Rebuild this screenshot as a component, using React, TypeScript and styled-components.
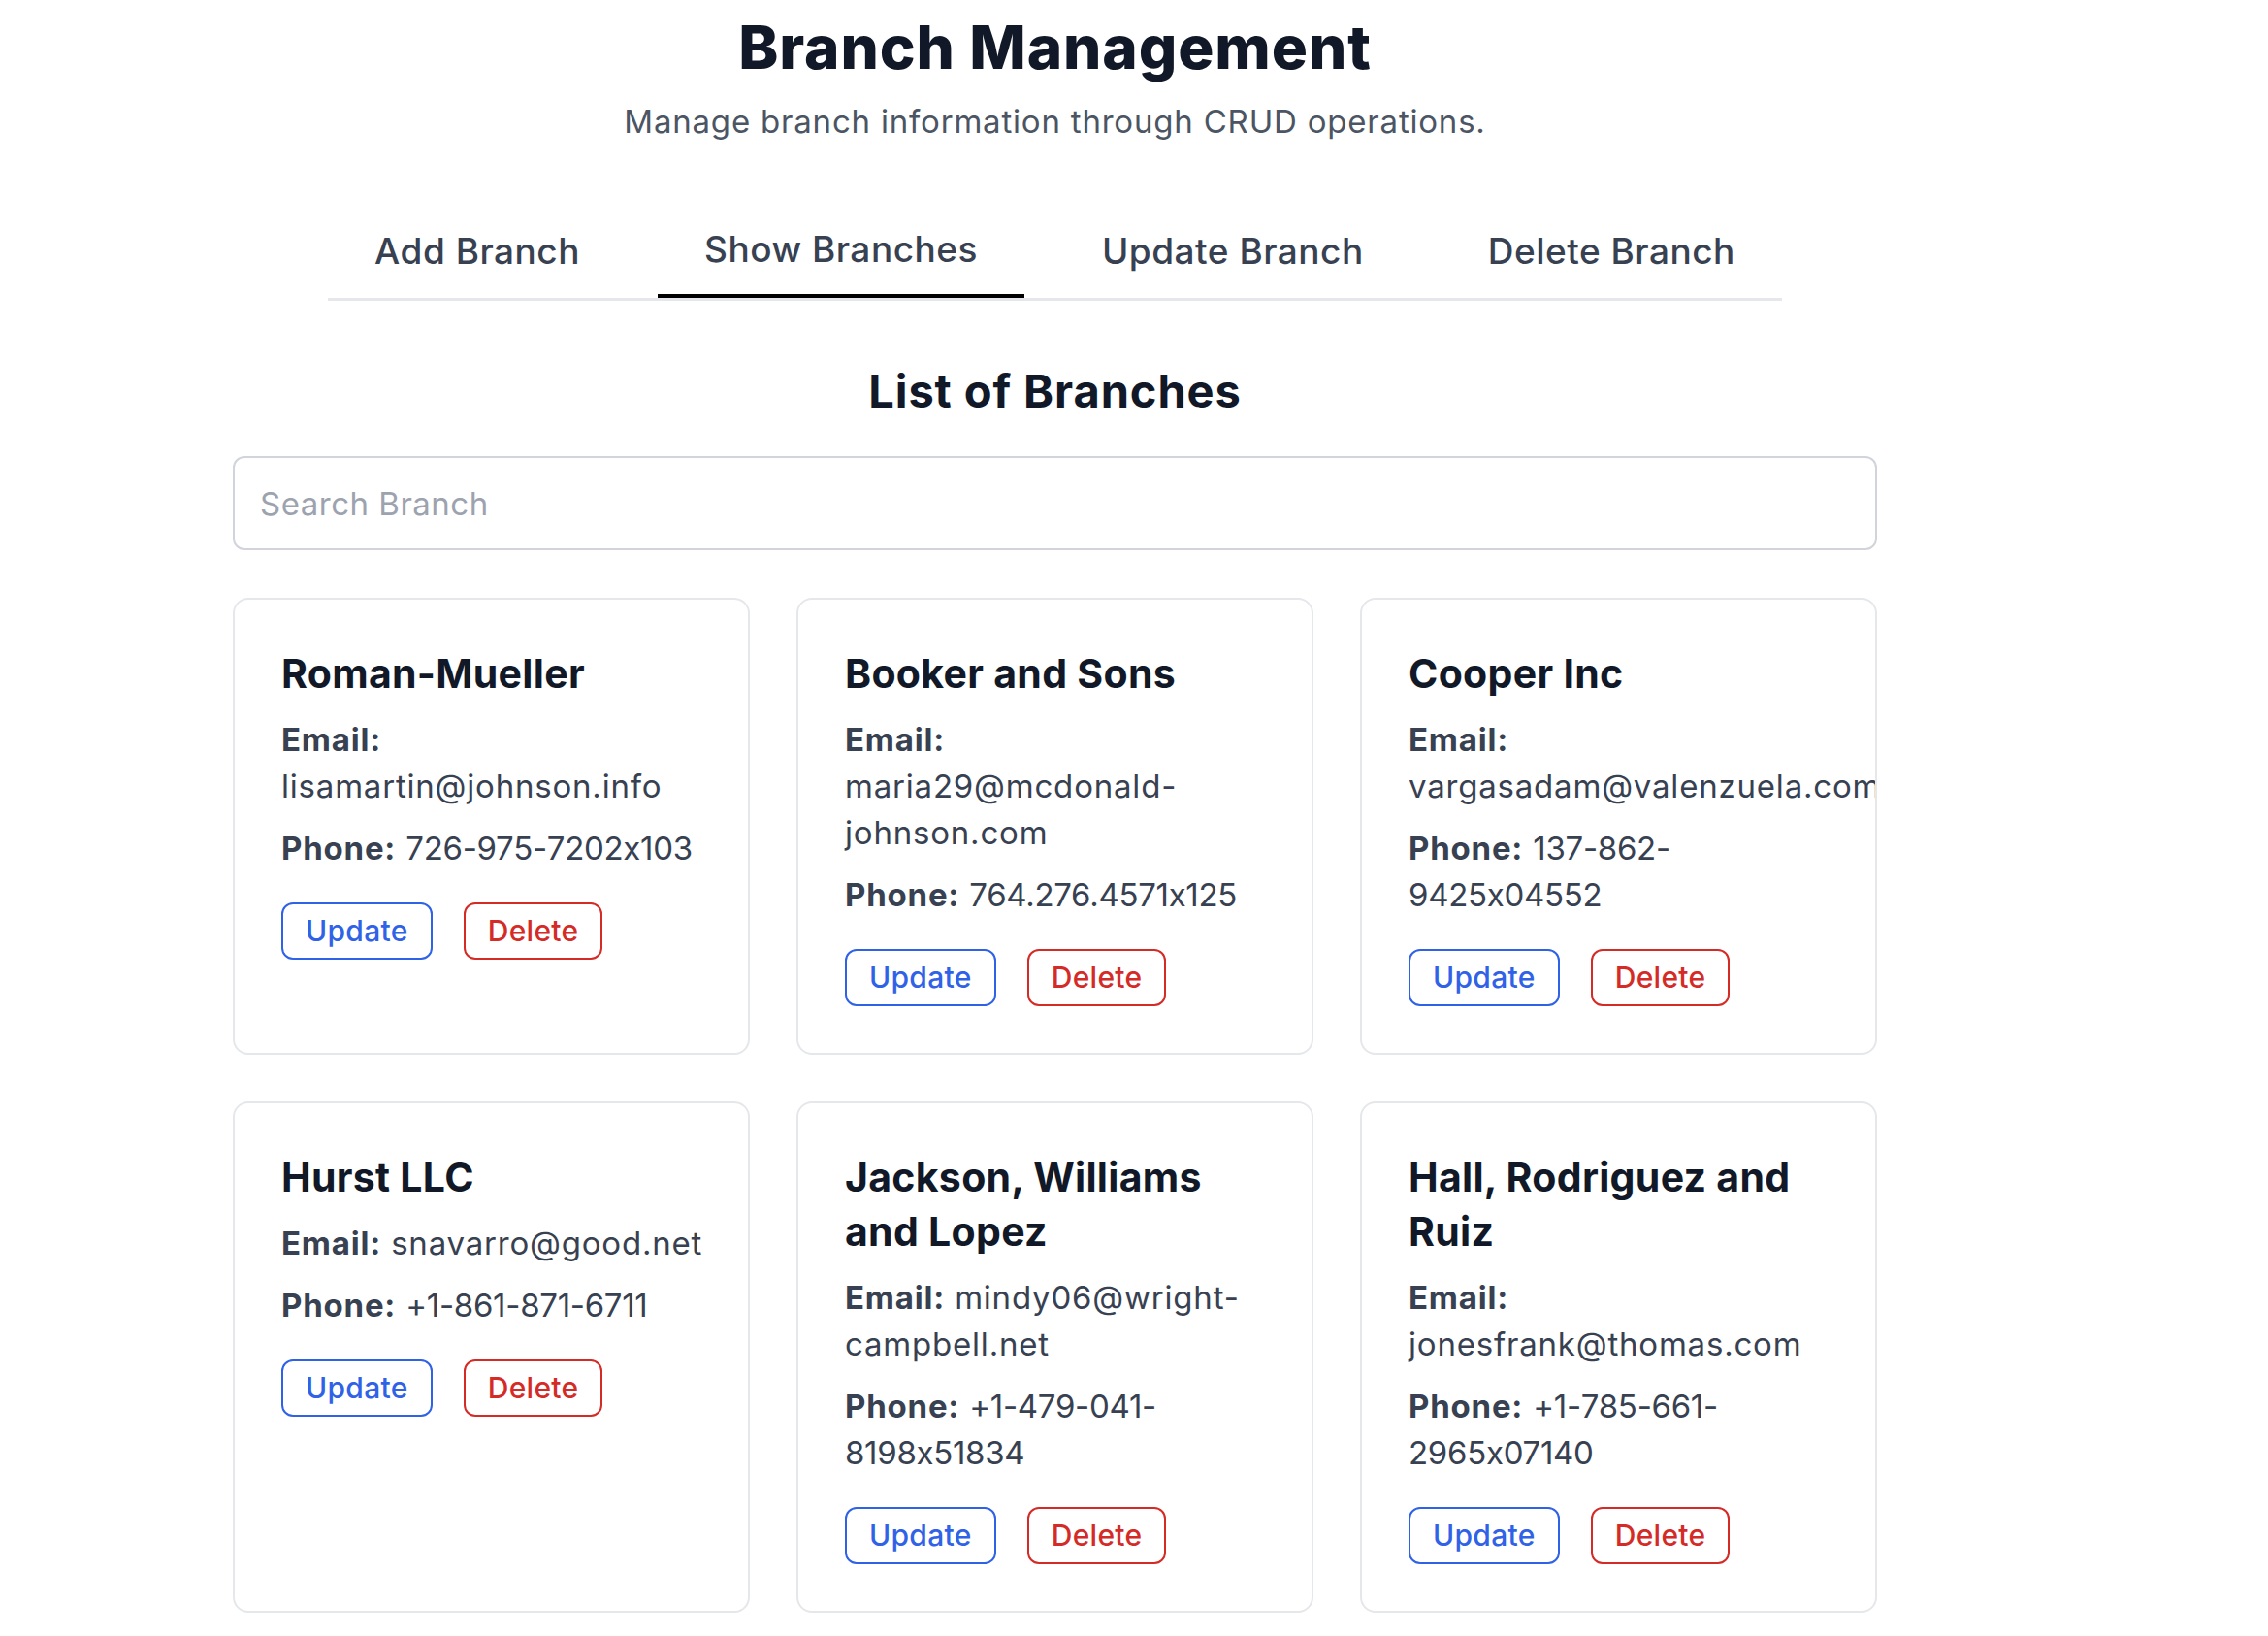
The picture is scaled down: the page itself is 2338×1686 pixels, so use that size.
import React from "react";
import styled, { createGlobalStyle } from "styled-components";

const GlobalStyle = createGlobalStyle`
  html, body { margin: 0; padding: 0; background: #ffffff; }
  body {
    font-family: Inter, "Noto Sans", "Liberation Sans", sans-serif;
    color: #374151;
    font-variant-numeric: proportional-nums;
  }
  * { box-sizing: border-box; }
`;

const Main = styled.main`
  width: 1695px;
  margin-left: 240px;
  padding-top: 14px;
  padding-bottom: 24px;
`;

const Header = styled.header`
  text-align: center;
`;

const Title = styled.h1`
  margin: 0;
  font-size: 62px;
  line-height: 70px;
  font-weight: 800;
  letter-spacing: 0.9px;
  color: #111827;
`;

const Subtitle = styled.p`
  margin: 17px 0 0;
  font-size: 33px;
  line-height: 48px;
  letter-spacing: 0.8px;
  color: #4b5563;
`;

const TabBar = styled.nav`
  display: flex;
  gap: 32px;
  width: fit-content;
  margin: 63px auto 0;
  border-bottom: 3px solid #e5e7eb;
`;

const Tab = styled.button<{ $active?: boolean }>`
  appearance: none;
  background: none;
  border: none;
  border-bottom: 4px solid ${(p) => (p.$active ? "#000000" : "transparent")};
  padding: ${(p) => (p.$active ? "21px 48px 22px" : "23px 48px 20px")};
  font-family: inherit;
  font-size: 37px;
  line-height: 48px;
  font-weight: 500;
  letter-spacing: 0.5px;
  color: #374151;
  cursor: pointer;
`;

const SectionTitle = styled.h2`
  margin: 61px 0 0;
  text-align: center;
  font-size: 47px;
  line-height: 64px;
  font-weight: 700;
  letter-spacing: 0.9px;
  color: #111827;
`;

const SearchInput = styled.input`
  display: block;
  width: 100%;
  height: 97px;
  margin-top: 35px;
  padding: 0 26px;
  border: 2px solid #d1d5db;
  border-radius: 12px;
  font-family: inherit;
  font-size: 33px;
  letter-spacing: 0.5px;
  color: #374151;
  outline: none;
  &::placeholder { color: #9ca3af; }
`;

const Grid = styled.div`
  display: grid;
  grid-template-columns: repeat(3, 1fr);
  gap: 48px;
  margin-top: 49px;
`;

const Card = styled.article`
  border: 2px solid #e5e7eb;
  border-radius: 16px;
  padding: 48px 34px 48px 48px;
  background: #ffffff;
  overflow: hidden;
`;

const CardTitle = styled.h3`
  margin: 0 0 16px;
  font-size: 41px;
  line-height: 56px;
  font-weight: 700;
  letter-spacing: 0.3px;
  color: #111827;
`;

const Info = styled.p`
  margin: 0 0 16px;
  font-size: 33px;
  line-height: 48px;
  letter-spacing: 0.8px;
  color: #374151;
`;

const Label = styled.strong`
  font-weight: 700;
  color: #374151;
`;

const Value = styled.span<{ $numeric?: boolean }>`
  letter-spacing: ${(p) => (p.$numeric ? "-0.3px" : "inherit")};
`;

const Actions = styled.div`
  display: flex;
  gap: 32px;
  margin-top: 32px;
`;

const ActionButton = styled.button<{ $tone: "blue" | "red" }>`
  appearance: none;
  background: #ffffff;
  height: 59px;
  padding: 0 23px;
  border: 2px solid ${(p) => (p.$tone === "blue" ? "#2f62e6" : "#d42b27")};
  border-radius: 12px;
  color: ${(p) => (p.$tone === "blue" ? "#2f62e6" : "#d42b27")};
  font-family: inherit;
  font-size: 30px;
  line-height: 39px;
  font-weight: 500;
  letter-spacing: 0.3px;
  cursor: pointer;
`;

type Branch = { name: string; email: string; phone: string };

const branches: Branch[] = [
  { name: "Roman-Mueller", email: "lisamartin@johnson.info", phone: "726-975-7202x103" },
  { name: "Booker and Sons", email: "maria29@mcdonald-johnson.com", phone: "764.276.4571x125" },
  { name: "Cooper Inc", email: "vargasadam@valenzuela.com", phone: "137-862-9425x04552" },
  { name: "Hurst LLC", email: "snavarro@good.net", phone: "+1-861-871-6711" },
  { name: "Jackson, Williams and Lopez", email: "mindy06@wright-campbell.net", phone: "+1-479-041-8198x51834" },
  { name: "Hall, Rodriguez and Ruiz", email: "jonesfrank@thomas.com", phone: "+1-785-661-2965x07140" },
];

function Breakable({ text }: { text: string }) {
  const parts = text.split("-");
  return (
    <>
      {parts.map((part, i) => (
        <React.Fragment key={i}>
          {part}
          {i < parts.length - 1 && (
            <>
              -<wbr />
            </>
          )}
        </React.Fragment>
      ))}
    </>
  );
}

const tabs = ["Add Branch", "Show Branches", "Update Branch", "Delete Branch"];

export default function App() {
  return (
    <>
      <GlobalStyle />
      <Main>
        <Header>
          <Title>Branch Management</Title>
          <Subtitle>Manage branch information through CRUD operations.</Subtitle>
        </Header>
        <TabBar>
          {tabs.map((t) => (
            <Tab key={t} $active={t === "Show Branches"}>
              {t}
            </Tab>
          ))}
        </TabBar>
        <SectionTitle>List of Branches</SectionTitle>
        <SearchInput placeholder="Search Branch" />
        <Grid>
          {branches.map((b) => (
            <Card key={b.name}>
              <CardTitle>{b.name}</CardTitle>
              <Info>
                <Label>Email:</Label>{" "}
                <Value>
                  <Breakable text={b.email} />
                </Value>
              </Info>
              <Info>
                <Label>Phone:</Label>{" "}
                <Value $numeric>
                  <Breakable text={b.phone} />
                </Value>
              </Info>
              <Actions>
                <ActionButton $tone="blue">Update</ActionButton>
                <ActionButton $tone="red">Delete</ActionButton>
              </Actions>
            </Card>
          ))}
        </Grid>
      </Main>
    </>
  );
}
